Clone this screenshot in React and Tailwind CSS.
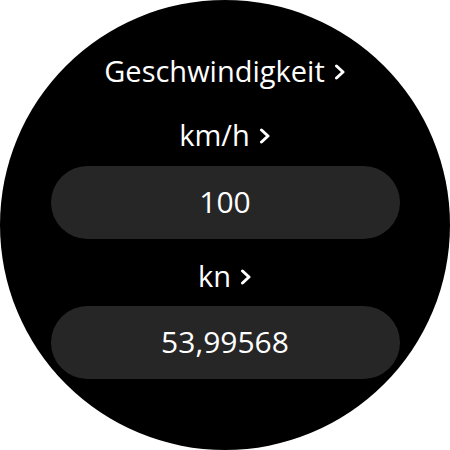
import React from 'react';

const Chevron = () => (
    <svg width="12" height="16" viewBox="0 0 12 16" className="ml-[9px] mt-[1px]">
        <polyline points="2.5,2 9,8 2.5,14" fill="none" stroke="white" strokeWidth="3" strokeLinecap="round" strokeLinejoin="round" />
    </svg>
);

const Label = ({ text, className }) => (
    <div className={`flex items-center h-[36px] text-[29px] leading-[36px] text-white ${className}`}>
        <span>{text}</span>
        <Chevron />
    </div>
);

const ValueField = ({ value, className }) => (
    <div className={`w-[349px] h-[73px] rounded-full bg-[#262626] flex items-center justify-center text-[30px] text-white ${className}`}>
        <span className="-mt-[2px]">{value}</span>
    </div>
);

const App = () => {
    return (
        <div className="w-[450px] h-[450px] bg-white" style={{ fontFamily: '"Open Sans", "Noto Sans", sans-serif' }}>
            <div className="w-full h-full rounded-full bg-black flex flex-col items-center pt-[53px]">
                <Label text="Geschwindigkeit" />
                <Label text="km/h" className="mt-[28px]" />
                <ValueField value="100" className="mt-[13px]" />
                <Label text="kn" className="mt-[19px]" />
                <ValueField value="53,99568" className="mt-[12px]" />
            </div>
        </div>
    );
};

export default App;
